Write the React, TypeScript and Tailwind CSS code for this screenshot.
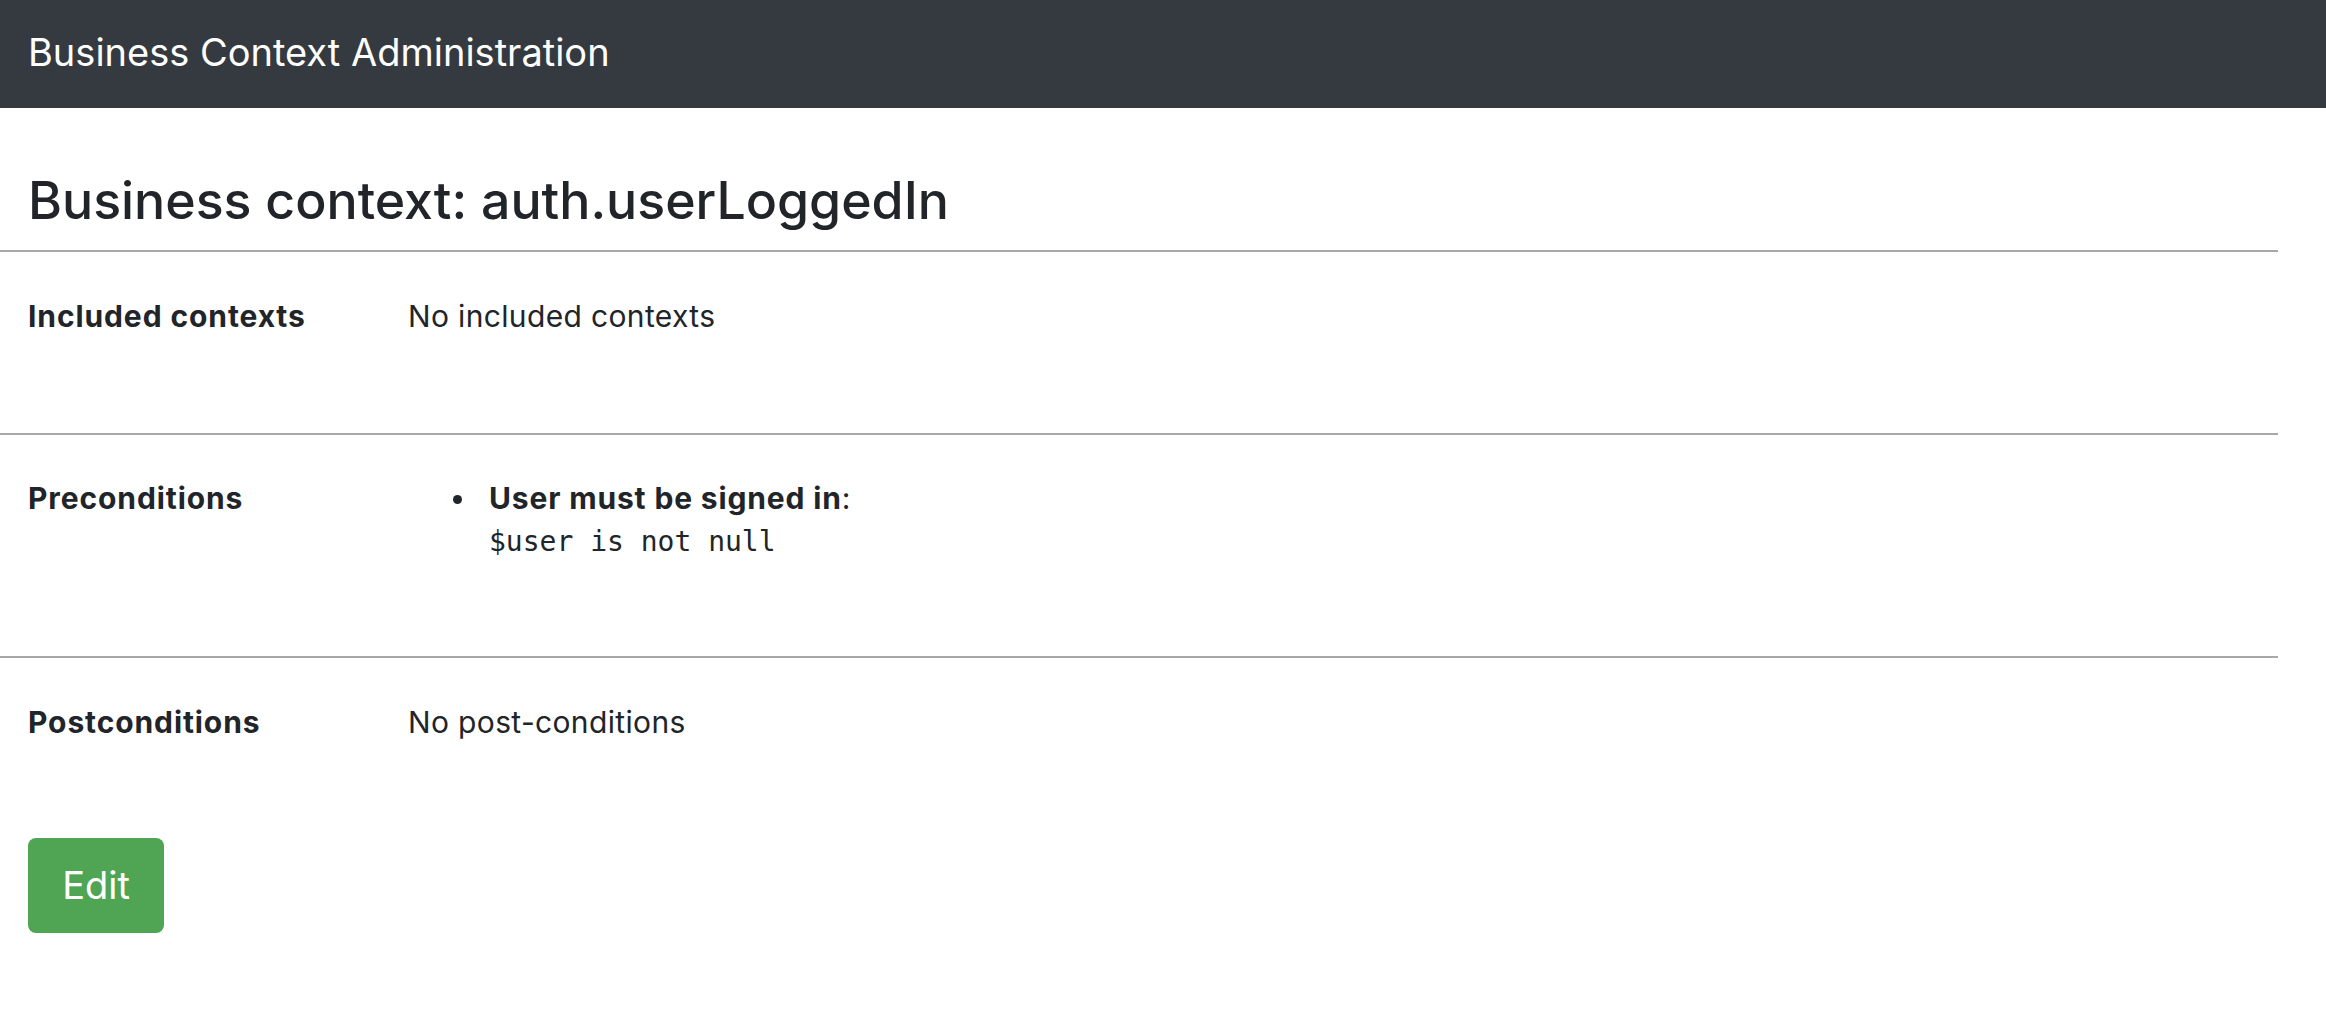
import React from "react";

const preconditions = [{ name: "User must be signed in", expr: "$user is not null" }];

function Rule() {
  return <div className="h-[2px] bg-[#a8a8a8]" />;
}

export default function App() {
  return (
    <div className="min-h-screen bg-white font-['Inter',sans-serif] text-[#212529]">
      <header className="flex h-[108px] items-center bg-[#343a40] px-[28px] pb-[4px]">
        <span className="text-[38px] text-white">Business Context Administration</span>
      </header>

      <main className="pr-[48px]">
        <div className="pl-[28px] pt-[62px] pb-[20px]">
          <h3 className="text-[51.8px] font-medium leading-[60px]">Business context: auth.userLoggedIn</h3>
        </div>
        <Rule />

        <section className="flex pl-[28px] pt-[43px] pb-[94px] text-[30px] leading-[43.5px] tracking-[0.35px]">
          <div className="w-[380px] shrink-0 font-bold tracking-[0.9px]">Included contexts</div>
          <div>No included contexts</div>
        </section>
        <Rule />

        <section className="flex pl-[28px] pt-[42px] pb-[92px] text-[30px] leading-[43.5px] tracking-[0.35px]">
          <div className="w-[380px] shrink-0 font-bold tracking-[0.9px]">Preconditions</div>
          <ul className="pl-[45px]">
            {preconditions.map((p) => (
              <li key={p.name} className="flex">
                <span className="mt-[18px] mr-[27px] h-[9px] w-[9px] shrink-0 rounded-full bg-[#212529]" />
                <div>
                  <strong className="font-bold tracking-[0.85px]">{p.name}</strong>:
                  <div className="font-['DejaVu_Sans_Mono',monospace] text-[28px] leading-[43.5px] tracking-normal">
                    {p.expr}
                  </div>
                </div>
              </li>
            ))}
          </ul>
        </section>
        <Rule />

        <section className="flex pl-[28px] pt-[43px] pb-[94px] text-[30px] leading-[43.5px] tracking-[0.35px]">
          <div className="w-[380px] shrink-0 font-bold tracking-[0.9px]">Postconditions</div>
          <div>No post-conditions</div>
        </section>

        <div className="pl-[28px]">
          <button className="flex h-[95px] w-[136px] items-center justify-center rounded-[8px] bg-[#4fa553] text-[38px] text-white">
            Edit
          </button>
        </div>
      </main>
    </div>
  );
}
